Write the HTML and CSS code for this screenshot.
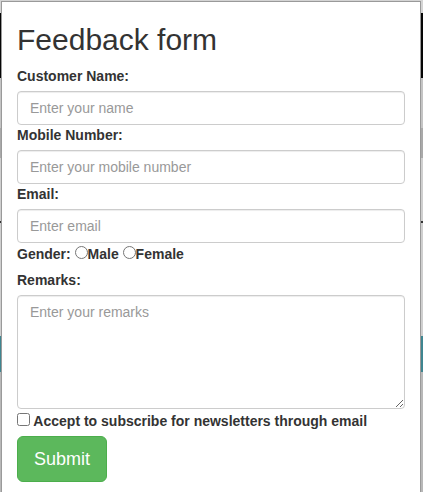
FILE: index.html
```html
<!DOCTYPE html>
<html lang="en">
<head>
<meta charset="utf-8">
<title>Feedback form</title>
<link rel="stylesheet" href="styles.css">
</head>
<body>
<div class="modal">
  <h2 class="title">Feedback form</h2>
  <form class="form">
    <div class="group">
      <label class="label" for="name">Customer Name:</label>
      <input class="control" id="name" type="text" placeholder="Enter your name">
    </div>
    <div class="group">
      <label class="label" for="mobile">Mobile Number:</label>
      <input class="control" id="mobile" type="text" placeholder="Enter your mobile number">
    </div>
    <div class="group">
      <label class="label" for="email">Email:</label>
      <input class="control" id="email" type="email" placeholder="Enter email">
    </div>
    <div class="gender">Gender: <input class="radio" type="radio" name="gender">Male <input class="radio" type="radio" name="gender">Female</div>
    <div class="group">
      <label class="label" for="remarks">Remarks:</label>
      <textarea class="control area" id="remarks" rows="5" placeholder="Enter your remarks"></textarea>
    </div>
    <div class="check"><input class="checkbox" type="checkbox"> Accept to subscribe for newsletters through email</div>
    <div class="actions"><button class="submit" type="button">Submit</button></div>
  </form>
</div>
</body>
</html>
```
FILE: styles.css
```css
html, body {
  margin: 0;
  padding: 0;
}
body {
  height: 492px;
  overflow: hidden;
  font-family: "Liberation Sans", Arial, Helvetica, sans-serif;
  font-size: 14px;
  line-height: 20px;
  color: #333;
  background: linear-gradient(to bottom,
    #d4d4d4 0, #d4d4d4 13px,
    #050505 13px, #050505 78px,
    #c4c4c4 78px, #c4c4c4 128px,
    #a9a9a9 128px, #a9a9a9 158px,
    #cfcfcf 158px, #cfcfcf 221px,
    #333 221px, #333 223px,
    #cfcfcf 223px, #cfcfcf 336px,
    #3e8590 336px, #3e8590 372px,
    #b8b8b8 372px, #b8b8b8 492px);
  padding-top: 1px;
  box-sizing: border-box;
}
.modal {
  margin-left: 1px;
  width: 420px;
  min-height: 500px;
  box-sizing: border-box;
  background: #fff;
  border: 1px solid #9a9a9a;
  border-bottom: none;
  padding: 0 15px;
}
.title {
  margin: 21px 0 10px;
  font-size: 30px;
  line-height: 33px;
  font-weight: normal;
  color: #333;
}
.form {
  display: flex;
  flex-direction: column;
}
.group {
  display: flex;
  flex-direction: column;
}
.label {
  font-weight: bold;
  margin-bottom: 5px;
}
.control {
  display: block;
  width: 100%;
  height: 34px;
  box-sizing: border-box;
  padding: 6px 12px;
  margin: 0;
  font-family: inherit;
  font-size: 14px;
  line-height: 20px;
  color: #555;
  background: #fff;
  border: 1px solid #ccc;
  border-radius: 4px;
  box-shadow: inset 0 1px 1px rgba(0, 0, 0, 0.075);
}
.control::placeholder {
  color: #999;
  opacity: 1;
}
.area {
  height: 114px;
  resize: vertical;
}
.gender {
  font-weight: bold;
  padding-top: 1px;
  margin-bottom: 6px;
}
.radio {
  margin: 0;
  width: 13px;
  height: 13px;
}
.check {
  font-weight: bold;
  margin-top: 2px;
  margin-bottom: 5px;
}
.checkbox {
  margin: 0;
  width: 13px;
  height: 13px;
}
.actions {
  display: flex;
}
.submit {
  padding: 10px 16px;
  font-family: inherit;
  font-size: 18px;
  line-height: 24px;
  color: #fff;
  background: #5cb85c;
  border: 1px solid #4cae4c;
  border-radius: 6px;
  cursor: pointer;
}
```
